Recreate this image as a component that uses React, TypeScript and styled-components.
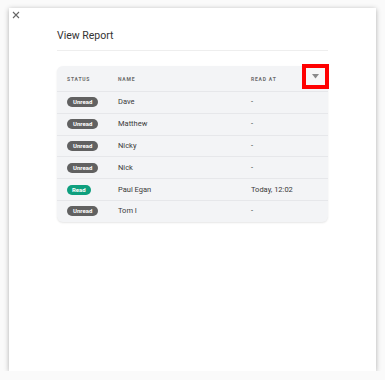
import React from "react";
import styled, { createGlobalStyle } from "styled-components";

const GlobalStyle = createGlobalStyle`
  html, body {
    margin: 0;
    padding: 0;
    background: #fafafa;
    font-family: Roboto, "Liberation Sans", sans-serif;
  }
`;

const Modal = styled.div`
  position: relative;
  box-sizing: border-box;
  margin: 8px 0 0 9px;
  width: 367px;
  height: 363px;
  background: #ffffff;
  box-shadow: 0 1px 5px rgba(0, 0, 0, 0.3);
  padding: 21px 48px 0 48px;
`;

const CloseButton = styled.div`
  position: absolute;
  top: 2px;
  left: 2px;
  width: 10px;
  height: 10px;
  display: flex;
  align-items: center;
  justify-content: center;
`;

const Title = styled.h2`
  margin: 0;
  font-size: 10.5px;
  font-weight: 400;
  color: #333;
  line-height: 14px;
  padding-bottom: 7px;
  border-bottom: 1px solid #eeeeee;
`;

const Card = styled.div`
  margin-top: 15px;
  background: #f3f4f6;
  border-radius: 6px;
  box-shadow: 0 1px 2px rgba(0, 0, 0, 0.1);
`;

const Row = styled.div<{ $header?: boolean }>`
  display: grid;
  grid-template-columns: 51px 133px 1fr;
  align-items: center;
  height: ${(p) => (p.$header ? "25px" : "21.8px")};
  padding-left: 10px;
  border-top: ${(p) => (p.$header ? "none" : "1px solid #e6e7ea")};
  box-sizing: border-box;
  position: relative;
`;

const HeadCell = styled.div`
  font-size: 5px;
  font-weight: 700;
  letter-spacing: 0.8px;
  color: #6b6b6b;
  text-transform: uppercase;
`;

const Cell = styled.div`
  display: flex;
  align-items: center;
  font-size: 7.5px;
  line-height: 10px;
  color: #3a3a3a;
`;

const Badge = styled.span<{ $read?: boolean }>`
  display: inline-flex;
  align-items: center;
  height: 10px;
  background: ${(p) => (p.$read ? "#0e9f7e" : "#616161")};
  color: #fff;
  font-size: 6px;
  font-weight: 700;
  padding: 0 ${(p) => (p.$read ? "5px" : "6px")};
  border-radius: 5px;
`;

const SortToggle = styled.div`
  position: absolute;
  right: -1px;
  top: -2px;
  width: 27px;
  height: 25px;
  box-sizing: border-box;
  border: 4px solid #ff0000;
  background: #f7f7f7;
  display: flex;
  align-items: center;
  justify-content: center;
`;

const rows = [
  { name: "Dave", read: false, at: "-" },
  { name: "Matthew", read: false, at: "-" },
  { name: "Nicky", read: false, at: "-" },
  { name: "Nick", read: false, at: "-" },
  { name: "Paul Egan", read: true, at: "Today, 12:02" },
  { name: "Tom I", read: false, at: "-" },
];

export default function App() {
  return (
    <>
      <GlobalStyle />
      <Modal>
        <CloseButton>
          <svg width="8" height="8" viewBox="0 0 8 8">
            <path d="M1 1L7 7M7 1L1 7" stroke="#666" strokeWidth="1.1" />
          </svg>
        </CloseButton>
        <Title>View Report</Title>
        <Card>
          <Row $header>
            <HeadCell>Status</HeadCell>
            <HeadCell>Name</HeadCell>
            <HeadCell>Read at</HeadCell>
            <SortToggle>
              <svg width="7" height="5" viewBox="0 0 7 5">
                <path d="M0 0H7L3.5 4.5Z" fill="#8a8a8a" />
              </svg>
            </SortToggle>
          </Row>
          {rows.map((r) => (
            <Row key={r.name}>
              <Cell>
                <Badge $read={r.read}>{r.read ? "Read" : "Unread"}</Badge>
              </Cell>
              <Cell>{r.name}</Cell>
              <Cell>{r.at}</Cell>
            </Row>
          ))}
        </Card>
      </Modal>
    </>
  );
}
